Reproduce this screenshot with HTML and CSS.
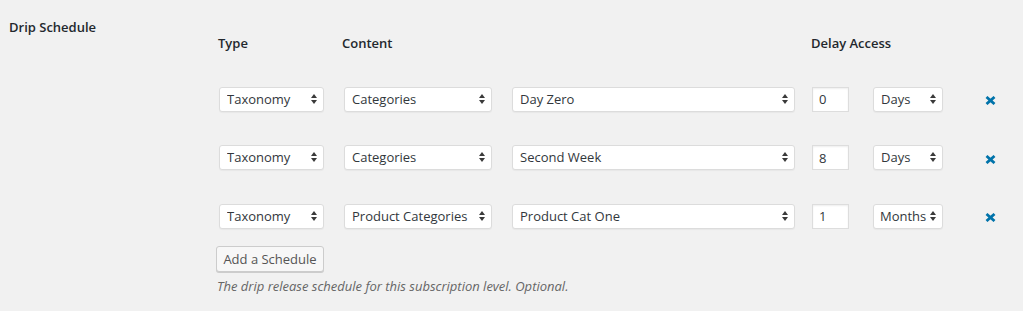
FILE: index.html
```html
<!DOCTYPE html>
<html>
<head>
<meta charset="utf-8">
<link rel="stylesheet" href="styles.css">
</head>
<body>
<div class="form-row">
  <div class="label">Drip Schedule</div>
  <div class="field">
    <div class="schedule">
      <div class="head">Type</div>
      <div class="head head-content">Content</div>
      <div class="head"></div>
      <div class="head head-delay">Delay Access</div>
      <div class="head"></div>
      <div class="head"></div>

      <span class="sel w-type"><select><option>Taxonomy</option></select><svg class="arr" viewBox="0 0 6 10"><path d="M3 0 L6 4 H0Z M3 10 L6 6 H0Z"/></svg></span>
      <span class="sel w-tax"><select><option>Categories</option></select><svg class="arr" viewBox="0 0 6 10"><path d="M3 0 L6 4 H0Z M3 10 L6 6 H0Z"/></svg></span>
      <span class="sel w-term"><select><option>Day Zero</option></select><svg class="arr" viewBox="0 0 6 10"><path d="M3 0 L6 4 H0Z M3 10 L6 6 H0Z"/></svg></span>
      <input class="num" type="text" value="0">
      <span class="sel w-unit"><select><option>Days</option></select><svg class="arr" viewBox="0 0 6 10"><path d="M3 0 L6 4 H0Z M3 10 L6 6 H0Z"/></svg></span>
      <span class="remove"><svg viewBox="0 0 11 9"><path d="M1.5 1 L9.5 8 M9.5 1 L1.5 8"/></svg></span>

      <span class="sel w-type"><select><option>Taxonomy</option></select><svg class="arr" viewBox="0 0 6 10"><path d="M3 0 L6 4 H0Z M3 10 L6 6 H0Z"/></svg></span>
      <span class="sel w-tax"><select><option>Categories</option></select><svg class="arr" viewBox="0 0 6 10"><path d="M3 0 L6 4 H0Z M3 10 L6 6 H0Z"/></svg></span>
      <span class="sel w-term"><select><option>Second Week</option></select><svg class="arr" viewBox="0 0 6 10"><path d="M3 0 L6 4 H0Z M3 10 L6 6 H0Z"/></svg></span>
      <input class="num" type="text" value="8">
      <span class="sel w-unit"><select><option>Days</option></select><svg class="arr" viewBox="0 0 6 10"><path d="M3 0 L6 4 H0Z M3 10 L6 6 H0Z"/></svg></span>
      <span class="remove"><svg viewBox="0 0 11 9"><path d="M1.5 1 L9.5 8 M9.5 1 L1.5 8"/></svg></span>

      <span class="sel w-type"><select><option>Taxonomy</option></select><svg class="arr" viewBox="0 0 6 10"><path d="M3 0 L6 4 H0Z M3 10 L6 6 H0Z"/></svg></span>
      <span class="sel w-tax"><select><option>Product Categories</option></select><svg class="arr" viewBox="0 0 6 10"><path d="M3 0 L6 4 H0Z M3 10 L6 6 H0Z"/></svg></span>
      <span class="sel w-term"><select><option>Product Cat One</option></select><svg class="arr" viewBox="0 0 6 10"><path d="M3 0 L6 4 H0Z M3 10 L6 6 H0Z"/></svg></span>
      <input class="num" type="text" value="1">
      <span class="sel w-unit"><select class="tight"><option>Months</option></select><svg class="arr" viewBox="0 0 6 10"><path d="M3 0 L6 4 H0Z M3 10 L6 6 H0Z"/></svg></span>
      <span class="remove"><svg viewBox="0 0 11 9"><path d="M1.5 1 L9.5 8 M9.5 1 L1.5 8"/></svg></span>
    </div>
    <button class="button" type="button">Add a Schedule</button>
    <p class="description">The drip release schedule for this subscription level. Optional.</p>
  </div>
</div>
</body>
</html>
```

FILE: styles.css
```css
html, body {
  margin: 0;
  padding: 0;
  background: #f1f1f1;
  font-family: "Open Sans", "Noto Sans", sans-serif;
  color: #23282d;
}

.form-row {
  display: flex;
}

.label {
  width: 207px;
  padding: 17px 0 0 9px;
  font-size: 13px;
  line-height: 20px;
  font-weight: 600;
  color: #23282d;
}

.field {
  padding-top: 33px;
  display: flex;
  flex-direction: column;
  align-items: flex-start;
}

.schedule {
  display: grid;
  grid-template-columns: 125px 168px 300px 61px 112px 20px;
  grid-template-rows: 20px 25px 25px 25px;
  row-gap: 33.5px;
  padding-left: 3px;
}
.schedule .head {
  font-size: 13px;
  line-height: 20px;
  font-weight: 600;
  color: #23282d;
  white-space: nowrap;
  align-self: start;
}
.schedule .head:first-child { margin-left: -1px; }
.schedule .head-content { margin-left: -2px; }
.schedule .head-delay { margin-left: -1px; }

.sel {
  position: relative;
  display: block;
  height: 25px;
  align-self: start;
}
.sel select {
  appearance: none;
  -webkit-appearance: none;
  box-sizing: border-box;
  width: 100%;
  height: 25px;
  margin: 0;
  padding: 0 16px 0 7px;
  border: 1px solid #dcdcdc;
  border-radius: 3px;
  background: #fff;
  box-shadow: 0 1px 1px rgba(0, 0, 0, 0.04);
  font-family: "Open Sans", "Noto Sans", sans-serif;
  font-size: 13px;
  line-height: 23px;
  color: #32373c;
  outline: none;
}
.sel select.tight { padding-left: 6px; padding-right: 12px; }
.sel .arr {
  position: absolute;
  right: 7px;
  top: 7px;
  width: 6px;
  height: 10px;
  fill: #3a3a3a;
  pointer-events: none;
}

.w-type { width: 105px; }
.w-tax { width: 148px; }
.w-term { width: 283px; }
.w-unit { width: 70px; }

.num {
  box-sizing: border-box;
  width: 37px;
  height: 25px;
  margin: 0;
  padding: 0 6px;
  border: 1px solid #ddd;
  border-radius: 0;
  background: #fff;
  box-shadow: inset 0 1px 2px rgba(0, 0, 0, 0.07);
  font-family: "Open Sans", "Noto Sans", sans-serif;
  font-size: 13px;
  color: #32373c;
  outline: none;
  align-self: start;
}

.remove {
  display: flex;
  align-items: center;
  height: 25px;
  align-self: start;
}
.remove svg {
  width: 11px;
  height: 9px;
  margin-top: 3px;
  stroke: #0073aa;
  stroke-width: 2.8;
  fill: none;
}

.button {
  margin: 17px 0 0 0;
  box-sizing: border-box;
  width: 108px;
  height: 26px;
  padding: 0 0 1px;
  background: #f7f7f7;
  border: 1px solid #ccc;
  border-radius: 3px;
  box-shadow: 0 1px 0 #ccc;
  font-family: "Open Sans", "Noto Sans", sans-serif;
  font-size: 13px;
  line-height: 24px;
  color: #555;
  white-space: nowrap;
  cursor: pointer;
}

.description {
  margin: 5px 0 0 1px;
  font-size: 13px;
  line-height: 18px;
  font-style: italic;
  color: #666;
}
```
